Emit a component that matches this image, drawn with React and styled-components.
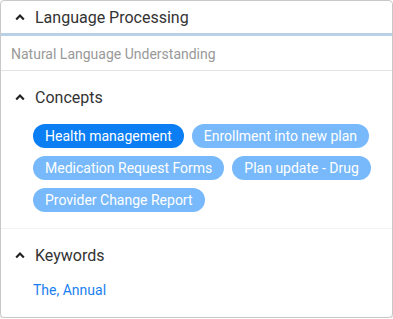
import React from 'react';
import styled, { createGlobalStyle } from 'styled-components';

const GlobalStyle = createGlobalStyle`
  html, body {
    margin: 0;
    padding: 0;
    background: #fff;
  }
  body {
    font-family: Roboto, "Noto Sans", Arial, sans-serif;
  }
`;

const Card = styled.div`
  box-sizing: border-box;
  width: 393px;
  height: 318px;
  border: 1px solid #c8c8c8;
  border-radius: 4px;
  box-shadow: 0 1px 0 #c9d8e6;
  overflow: hidden;
  display: flex;
  flex-direction: column;
`;

const PanelHeader = styled.div`
  height: 32px;
  display: flex;
  align-items: center;
  padding-left: 14px;
  border-bottom: 3px solid #b9d1e8;
`;

const SectionHeader = styled.div`
  display: flex;
  align-items: center;
  padding-left: 14px;
  height: 20px;
`;

const Title = styled.span`
  font-size: 16px;
  color: #333;
  margin-left: 10px;
`;

const Subtitle = styled.div`
  height: 35px;
  display: flex;
  align-items: center;
  padding: 2px 0 0 10px;
  box-sizing: border-box;
  font-size: 14px;
  color: #999;
  border-bottom: 1px solid #e3e3e3;
`;

const Section = styled.div`
  padding: ${(p) => p.pad};
  border-bottom: ${(p) => (p.divider ? '1px solid #f2f2f2' : 'none')};
`;

const ChipList = styled.div`
  display: flex;
  flex-wrap: wrap;
  gap: 8px;
  padding-left: 32px;
  margin-top: 17px;
`;

const Chip = styled.span`
  height: 24px;
  display: inline-flex;
  align-items: center;
  padding: 0 12px;
  border-radius: 12px;
  font-size: 14px;
  color: #fff;
  background: ${(p) => (p.active ? '#0a7ef2' : '#77b9fb')};
`;

const Keywords = styled.div`
  padding-left: 32px;
  margin-top: 17px;
  font-size: 14px;
  color: #1a7ff0;
`;

const Caret = () => (
  <svg width="10" height="8" viewBox="0 0 10 8">
    <polyline points="1.2,6.5 5,2.5 8.8,6.5" fill="none" stroke="#222" strokeWidth="2.2" />
  </svg>
);

const concepts = [
  { label: 'Health management', active: true },
  { label: 'Enrollment into new plan' },
  { label: 'Medication Request Forms' },
  { label: 'Plan update - Drug' },
  { label: 'Provider Change Report' },
];

export default function App() {
  return (
    <>
      <GlobalStyle />
      <Card>
        <PanelHeader>
          <Caret />
          <Title>Language Processing</Title>
        </PanelHeader>
        <Subtitle>Natural Language Understanding</Subtitle>
        <Section pad="16px 0 16px" divider>
          <SectionHeader>
            <Caret />
            <Title>Concepts</Title>
          </SectionHeader>
          <ChipList>
            {concepts.map((c) => (
              <Chip key={c.label} active={c.active}>
                {c.label}
              </Chip>
            ))}
          </ChipList>
        </Section>
        <Section pad="16px 0 0">
          <SectionHeader>
            <Caret />
            <Title>Keywords</Title>
          </SectionHeader>
          <Keywords>The, Annual</Keywords>
        </Section>
      </Card>
    </>
  );
}
